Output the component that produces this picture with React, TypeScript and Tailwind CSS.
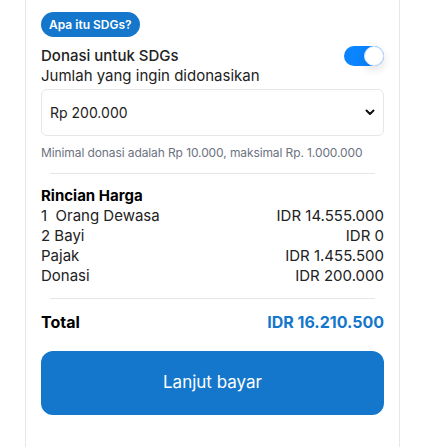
import React from "react";

export default function App() {
  const rows = [
    ["1  Orang Dewasa", "IDR 14.555.000"],
    ["2 Bayi", "IDR 0"],
    ["Pajak", "IDR 1.455.500"],
    ["Donasi", "IDR 200.000"],
  ];
  return (
    <div
      className="w-full h-[447px] bg-white overflow-hidden pl-[25px]"
      style={{ fontFamily: 'Inter, "Open Sans", sans-serif' }}
    >
      <div className="w-[375px] h-[447px] border-x border-[#e5e7eb] px-[15px] pt-3 text-[#222]">
        <div className="flex">
          <span className="rounded-full bg-[#1477cc] text-white text-[12px] font-semibold leading-[15px] py-[5px] px-2">
            Apa itu SDGs?
          </span>
        </div>
        <div className="mt-[9px] flex items-center justify-between h-5">
          <span className="text-[15px] leading-5 font-medium">Donasi untuk SDGs</span>
          <div className="w-10 h-5 rounded-full bg-[#0a84ff] flex justify-end">
            <div className="w-5 h-5 rounded-full bg-white border border-[#cfe6ff] shadow-[0_4px_10px_rgba(0,0,0,0.12)]" />
          </div>
        </div>
        <div className="text-[15px] leading-5">Jumlah yang ingin didonasikan</div>
        <div className="mt-[3px] h-[47px] rounded-md border border-[#e5e7eb] flex items-center justify-between pl-[8px] pr-[8px]">
          <span className="text-[14px]">Rp 200.000</span>
          <svg width="10" height="7" viewBox="0 0 10 7" fill="none">
            <path d="M1.5 1.5 L5 5 L8.5 1.5" stroke="#111" strokeWidth="2" strokeLinecap="round" strokeLinejoin="round" />
          </svg>
        </div>
        <div className="mt-[9px] text-[12px] leading-4 text-[#6b7280] tracking-[-0.1px]">
          Minimal donasi adalah Rp 10.000, maksimal Rp. 1.000.000
        </div>
        <div className="mt-3 mx-[9px] h-px bg-[#e5e7eb]" />
        <div className="mt-3 text-[15px] leading-5 font-bold text-black">Rincian Harga</div>
        {rows.map(([l, r]) => (
          <div key={l} className="flex justify-between text-[15px] leading-5 whitespace-pre">
            <span>{l}</span>
            <span>{r}</span>
          </div>
        ))}
        <div className="mt-3 mx-[9px] h-px bg-[#e5e7eb]" />
        <div className="mt-[11px] flex justify-between items-center h-6">
          <span className="text-[16px] font-bold text-black">Total</span>
          <span className="text-[16px] font-bold text-[#1477cc]">IDR 16.210.500</span>
        </div>
        <button className="mt-[17px] w-full h-16 rounded-xl bg-[#1477cc] text-white text-[17px] flex items-center justify-center">
          Lanjut bayar
        </button>
      </div>
    </div>
  );
}
